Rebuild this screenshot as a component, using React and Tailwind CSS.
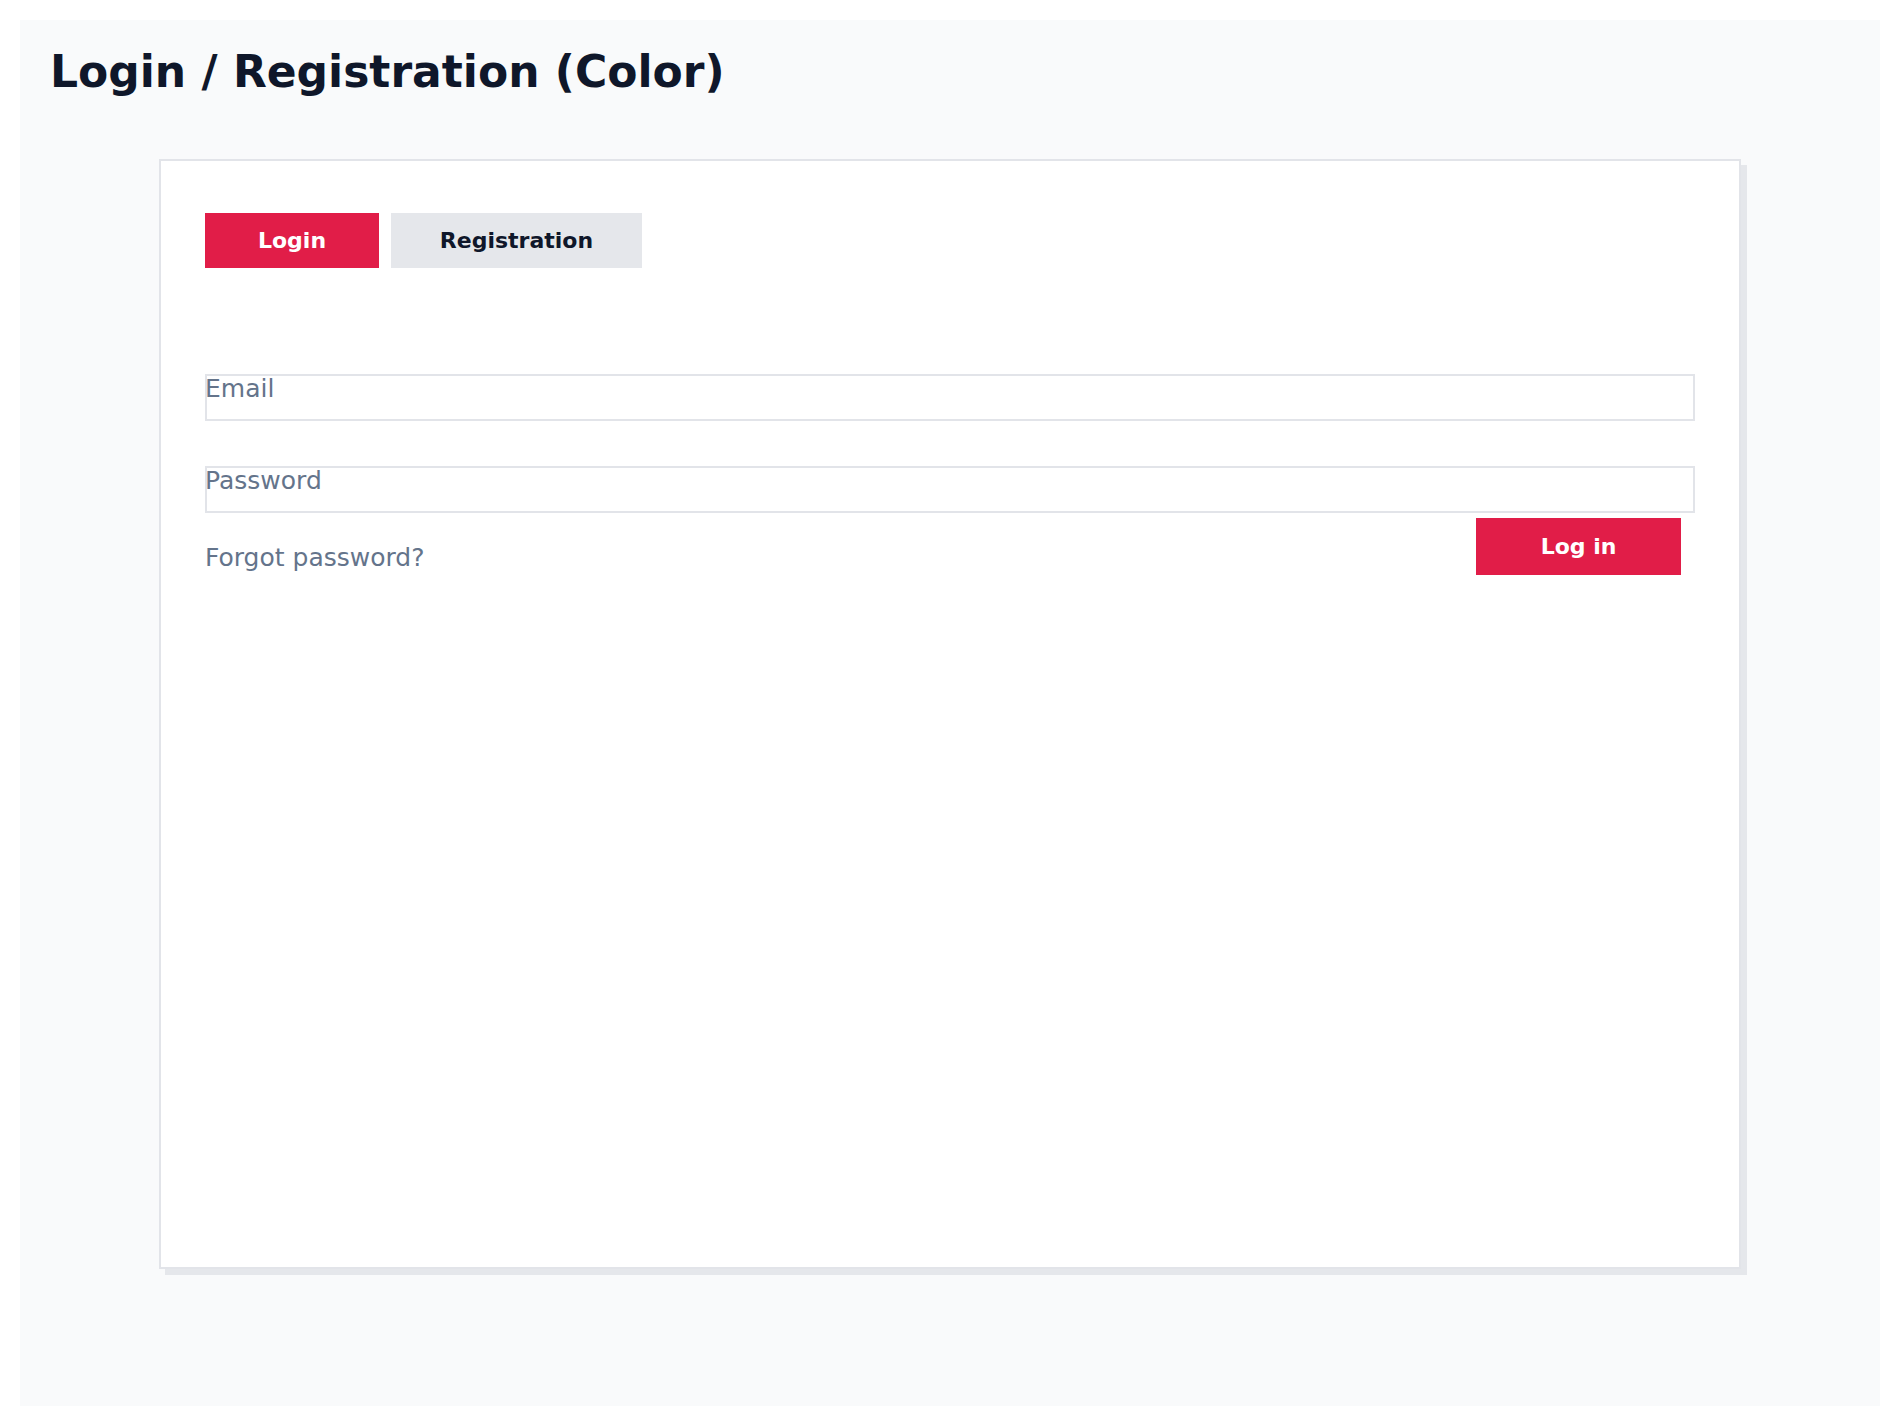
import React, { useState } from 'react';

const Field = ({ label, type }) => {
  const [value, setValue] = useState('');
  return (
    <div className="relative h-[47px] border-2 border-[#e2e4e9] bg-white">
      {!value && (
        <span className="pointer-events-none absolute left-[-2px] top-0 text-[25px] leading-none text-[#64748b]">
          {label}
        </span>
      )}
      <input
        type={type}
        value={value}
        onChange={(e) => setValue(e.target.value)}
        className="h-full w-full bg-transparent text-[25px] text-[#0f172a] outline-none"
      />
    </div>
  );
};

const App = () => {
  const [tab, setTab] = useState('login');

  return (
    <div className="bg-white p-[20px]" style={{ fontFamily: '"DejaVu Sans", "Liberation Sans", sans-serif' }}>
      <div className="min-h-[1386px] bg-[#f9fafb] px-[30px] pt-[30px]">
        <h1 className="text-[44px] font-bold leading-none text-[#0f172a]">Login / Registration (Color)</h1>

        {/* Card */}
        <div className="mx-auto mt-[65px] h-[1110px] w-[1582px] border-2 border-[#e2e4e9] bg-white px-[44px] pt-[52px] shadow-[6px_6px_0_#e5e7eb]">
          <div className="flex gap-[12px]">
            <button
              onClick={() => setTab('login')}
              className={`h-[55px] w-[174px] text-[22px] font-bold ${
                tab === 'login' ? 'bg-[#e11d48] text-white' : 'bg-[#e5e7eb] text-[#0f172a]'
              }`}
            >
              Login
            </button>
            <button
              onClick={() => setTab('registration')}
              className={`h-[55px] w-[251px] text-[22px] font-bold ${
                tab === 'registration' ? 'bg-[#e11d48] text-white' : 'bg-[#e5e7eb] text-[#0f172a]'
              }`}
            >
              Registration
            </button>
          </div>

          <div className="mt-[106px] flex flex-col gap-[45px]">
            <Field label="Email" type="email" />
            <Field label="Password" type="password" />
          </div>

          <div className="mt-[5px] flex items-start justify-between">
            <a href="#" className="mt-[27px] text-[25px] leading-none text-[#64748b]">
              Forgot password?
            </a>
            <button className="mr-[14px] h-[57px] w-[205px] bg-[#e11d48] text-[22px] font-bold text-white">
              Log in
            </button>
          </div>
        </div>
      </div>
    </div>
  );
};

export default App;
